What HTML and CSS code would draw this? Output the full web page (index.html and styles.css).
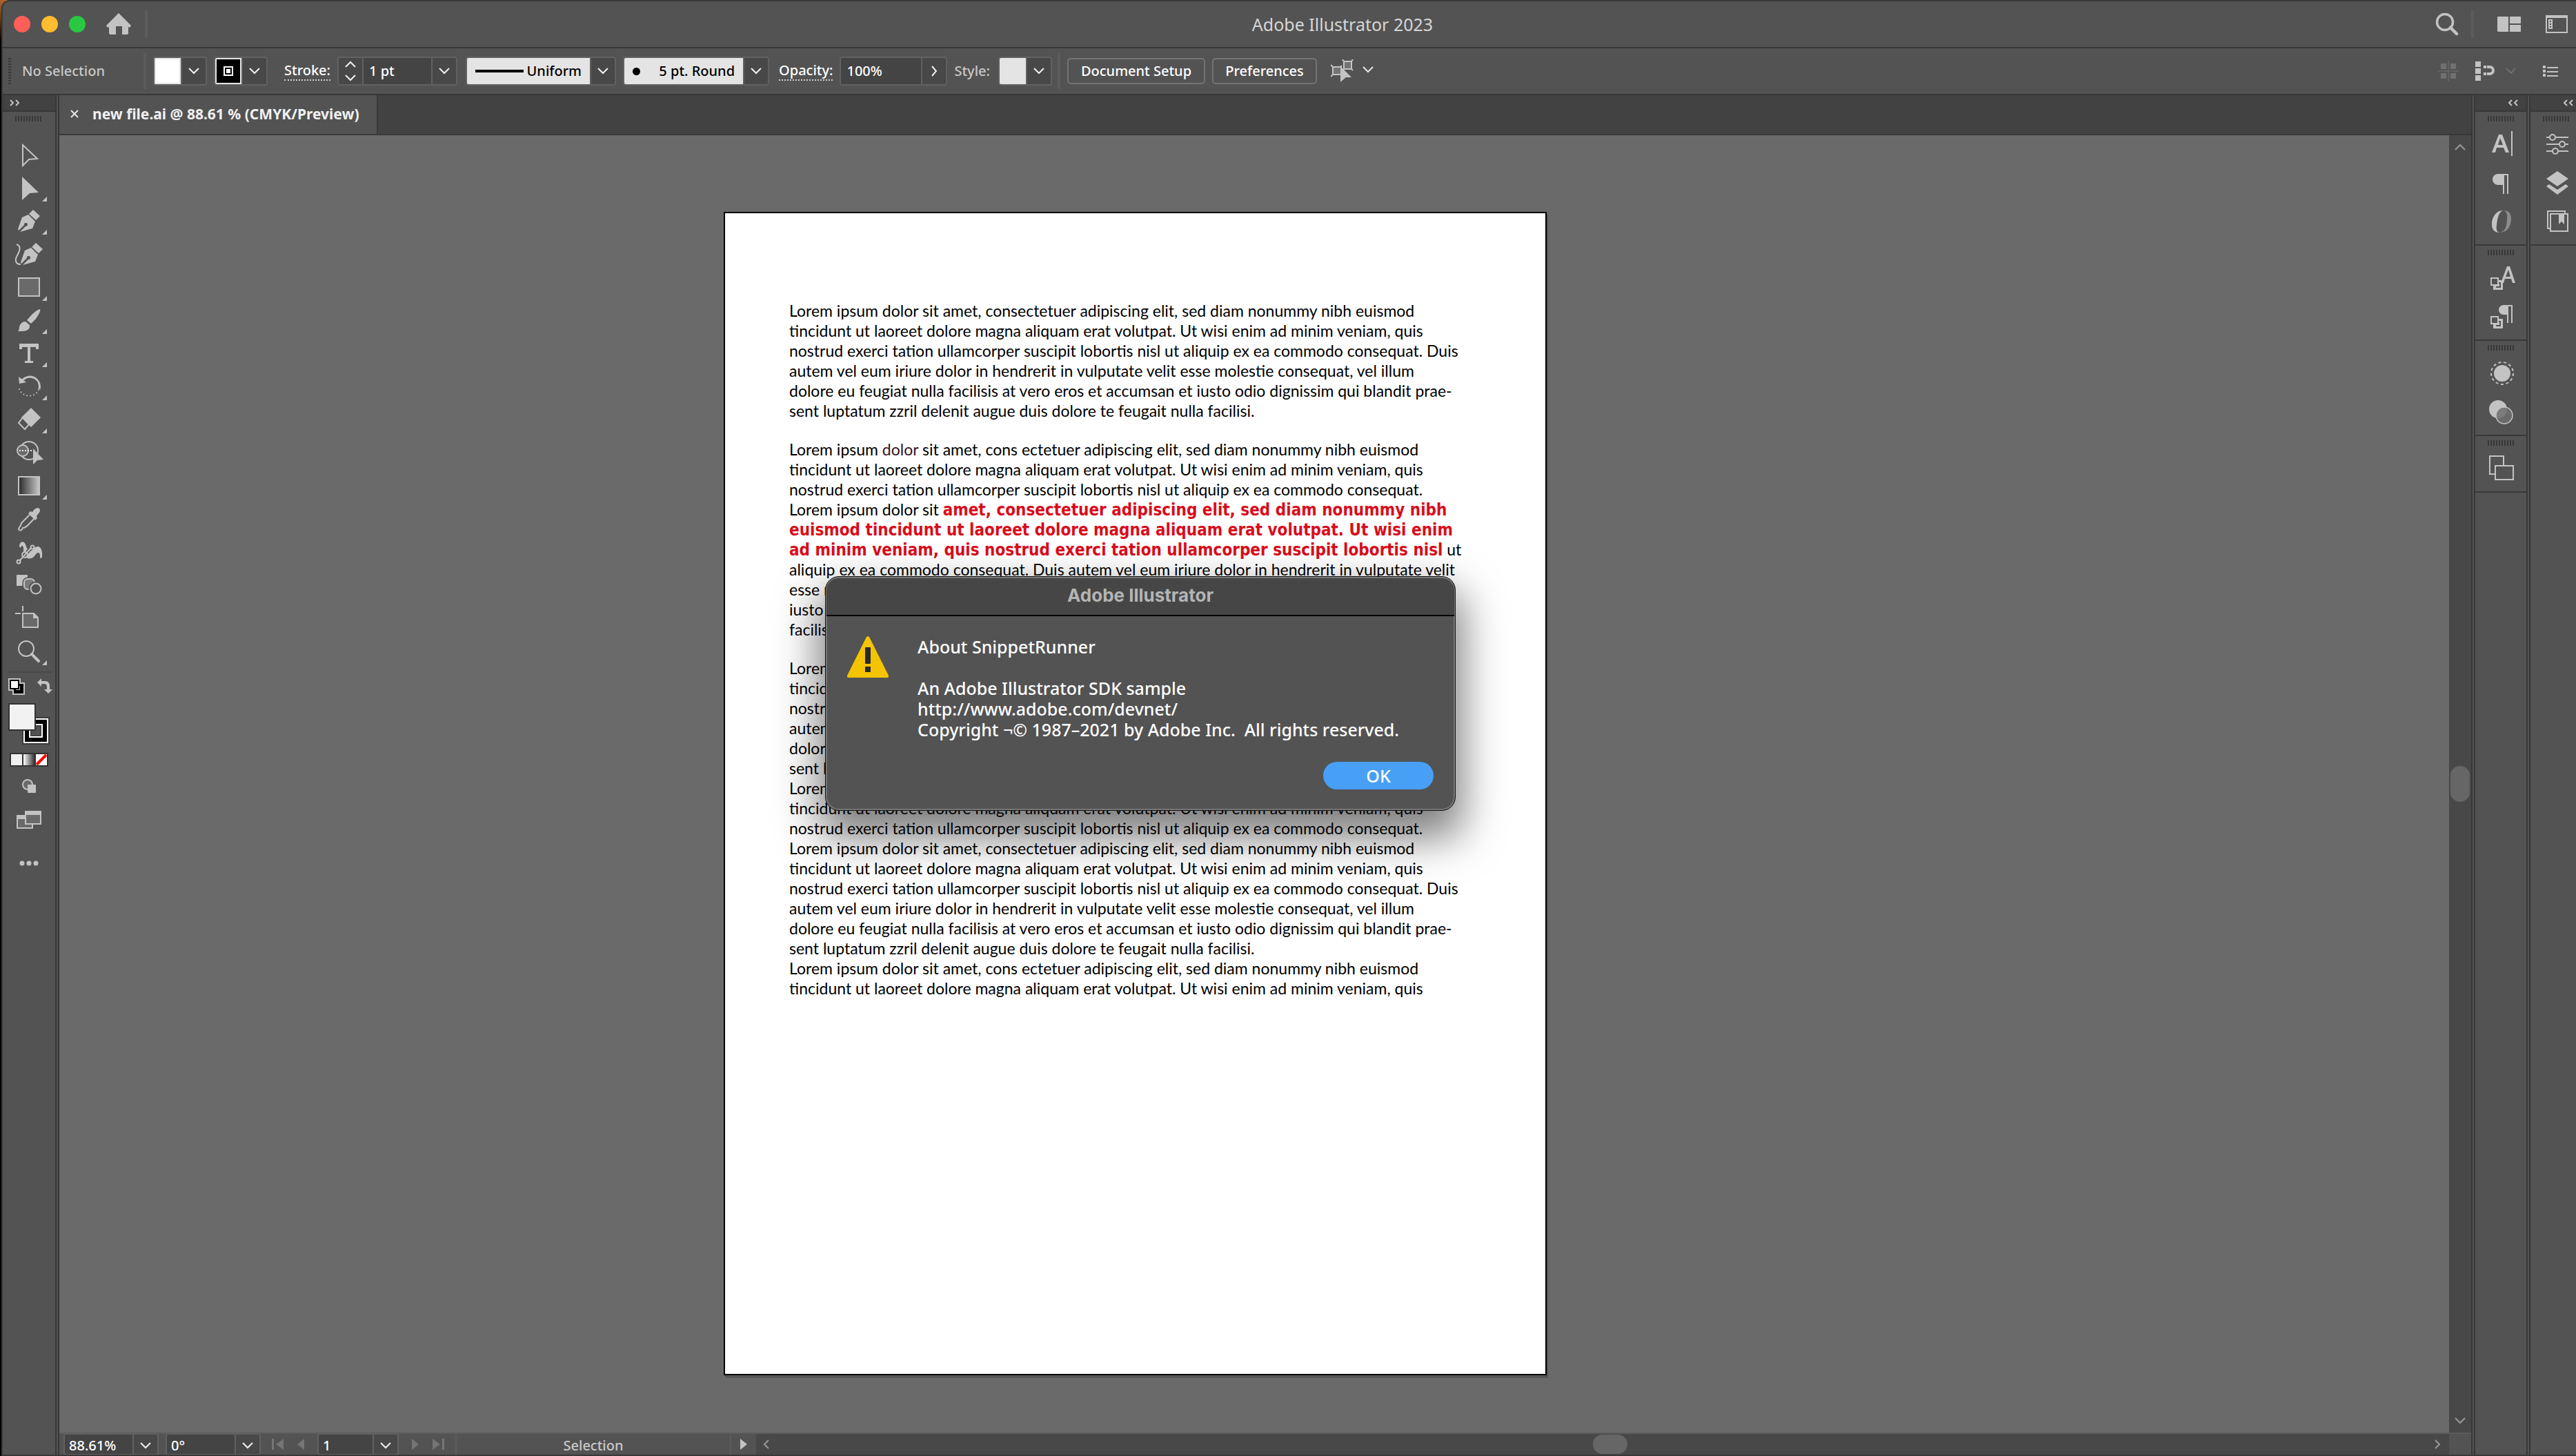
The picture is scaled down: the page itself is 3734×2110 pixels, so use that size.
FILE: index.html
```html
<!DOCTYPE html>
<html lang="en">
<head>
<meta charset="utf-8">
<title>Adobe Illustrator 2023</title>
<link rel="stylesheet" href="styles.css">
</head>
<body>
<div class="window">
  <header class="titlebar">
    <div class="lights">
      <button class="light light-close" aria-label="Close"></button>
      <button class="light light-min" aria-label="Minimize"></button>
      <button class="light light-max" aria-label="Zoom"></button>
    </div>
    <button class="icon-btn home" aria-label="Home"><svg width="36" height="32" viewBox="0 0 36 32"><path fill="#c3c3c3" d="M18 0 36 18 34 21 32 20V29Q32 31 30 31H23V19H14V31H6Q4 31 4 29V20L2 21 0 18Z"/></svg></button>
    <span class="vsep"></span>
    <h1 class="app-title">Adobe Illustrator 2023</h1>
    <div class="title-tools">
      <button class="icon-btn" aria-label="Search"><svg width="34" height="34" viewBox="0 0 34 34" fill="none" stroke="#c3c3c3"><circle cx="14" cy="14" r="11.500" stroke-width="3.500"/><path d="M22 22 31 31" stroke-width="4.500" stroke-linecap="round"/></svg></button>
      <span class="vsep"></span>
      <button class="icon-btn arrange" aria-label="Arrange documents"><svg width="34" height="22" viewBox="0 0 34 22" fill="#c3c3c3"><path d="M1 0H16V22H1L0 21V1ZM18 0H34V10H18ZM18 12H34V22H18Z"/></svg></button>
      <button class="icon-btn" aria-label="Workspace"><svg width="32" height="26" viewBox="0 0 32 26" fill="#c3c3c3"><path fill-rule="evenodd" d="M0 0H32V26H0ZM2 4V24H30V4ZM4 6H10V20H4ZM6 8V10H8V8ZM6 12V14H8V12ZM6 16V18H8V16Z"/></svg></button>
    </div>
  </header>

  <section class="controls" aria-label="Control panel">
    <span class="hgrip"></span>
    <span class="no-selection">No Selection</span>
    <span class="vsep control-sep"></span>
    <div class="combo fill-combo"><span class="swatch swatch-fill"></span><button class="drop" aria-label="Fill"><svg class="chev" viewBox="0 0 16 10"><path d="M1 1 8 8 15 1"/></svg></button></div>
    <div class="combo stroke-combo"><span class="swatch swatch-stroke"><svg width="14" height="14" viewBox="0 0 14 14"><path fill="#fff" fill-rule="evenodd" d="M0 0H14V14H0ZM2 2V12H12V2Z"/><path fill="#fff" d="M4 4H10V10H4Z"/></svg></span><button class="drop" aria-label="Stroke color"><svg class="chev" viewBox="0 0 16 10"><path d="M1 1 8 8 15 1"/></svg></button></div>
    <label class="dotted stroke-label" for="weight">Stroke:</label>
    <div class="combo weight-combo">
      <button class="stepper" aria-label="Step weight"><svg width="18" height="30" viewBox="0 0 18 30"><path d="M2 9 9 2 16 9M2 21 9 28 16 21"/></svg></button>
      <input class="field" id="weight" value="1 pt">
      <button class="drop" aria-label="Weights"><svg class="chev" viewBox="0 0 16 10"><path d="M1 1 8 8 15 1"/></svg></button>
    </div>
    <div class="combo profile-combo"><span class="sample"><span class="line"></span>Uniform</span><button class="drop" aria-label="Profile"><svg class="chev" viewBox="0 0 16 10"><path d="M1 1 8 8 15 1"/></svg></button></div>
    <div class="combo brush-combo"><span class="sample"><span class="dot"></span>5 pt. Round</span><button class="drop" aria-label="Brush"><svg class="chev" viewBox="0 0 16 10"><path d="M1 1 8 8 15 1"/></svg></button></div>
    <label class="dotted opacity-label" for="opacity">Opacity:</label>
    <div class="combo opacity-combo">
      <input class="field" id="opacity" value="100%">
      <button class="drop" aria-label="More opacity"><svg width="10" height="16" viewBox="0 0 10 16"><path d="M2 1 8 8 2 15"/></svg></button>
    </div>
    <span class="style-label">Style:</span>
    <div class="combo style-combo"><span class="swatch"></span><button class="drop" aria-label="Graphic style"><svg class="chev" viewBox="0 0 16 10"><path d="M1 1 8 8 15 1"/></svg></button></div>
    <span class="vsep control-sep"></span>
    <button class="push push-setup">Document Setup</button>
    <button class="push push-prefs">Preferences</button>
    <button class="icon-btn similar" aria-label="Select similar objects"><svg width="64" height="34" viewBox="0 0 64 34" fill="none" stroke="#c3c3c3" stroke-width="2"><path fill="#737373" d="M19 3H30V14H19ZM3 11H15V22H3Z"/><path d="M17 0 19 3M32 0 30 3M32 16 30 14M0 8 3 11M0 25 3 22M16 9 14 11"/><path fill="#c3c3c3" stroke="none" d="M14 10 30 26H22L14 33Z"/><path stroke="#e6e6e6" d="M47 11 54 18 61 11"/></svg></button>
    <div class="control-tools">
      <button class="icon-btn" aria-label="Snap to grid"><svg width="30" height="30" viewBox="0 0 30 30" fill="#707070"><path fill="#626262" d="M14 0H16V30H14ZM0 14H30V16H0Z"/><path d="M4 4H12V12H4ZM18 4H26V12H18ZM4 18H12V26H4ZM18 18H26V26H18Z"/></svg></button>
      <button class="icon-btn snap" aria-label="Snap to glyph"><svg width="60" height="28" viewBox="0 0 60 28" fill="#c3c3c3"><path d="M0 0H8V8H0ZM0 10H8V18H0ZM0 20H8V28H0ZM12 6H16V10H12ZM12 16H16V20H12ZM17 6H21A7 7 0 0 1 21 20H17V16H21A3 3 0 0 0 21 10H17Z"/><path d="M45 10 52 17 58 10" fill="none" stroke="#707070" stroke-width="2"/></svg></button>
      <button class="icon-btn" aria-label="Panel menu"><svg width="22" height="16" viewBox="0 0 22 16" fill="#c3c3c3"><path d="M0 0H4V4H0ZM0 6H4V10H0ZM0 12H4V16H0ZM6 2H22V4H6ZM6 8H22V10H6ZM6 14H22V16H6Z"/></svg></button>
    </div>
  </section>

  <main class="workspace">
    <nav class="tools" aria-label="Tools">
      <button class="collapse" aria-label="Expand tools"><svg width="14" height="10" viewBox="0 0 14 10"><path d="M1 1 5 5 1 9M9 1 13 5 9 9"/></svg></button>
      <span class="grip"></span>
      <div class="tool-list">
        <button class="tool" aria-label="Selection"><svg viewBox="0 0 76 48"><path d="M29 9V39L38 30 50 29Z" fill="none" stroke="#c3c3c3" stroke-width="2"/></svg></button>
        <button class="tool" aria-label="Direct Selection"><svg viewBox="0 0 76 48"><path d="M28 7 52 30 39 31 28 41Z"/><path d="M64 36V43H57Z"/></svg></button>
        <button class="tool" aria-label="Pen"><svg viewBox="0 0 76 48"><path d="M44 7 54 16 48 22 38 13ZM37 14 47 24 43 34 25 39 33 31A2.500 2.500 0 1 0 31 29L23 37 22 35 28 18Z"/><path d="M64 36V43H57Z"/></svg></button>
        <button class="tool" aria-label="Curvature"><svg viewBox="0 0 76 48"><path d="M48 7 58 16 52 22 42 13ZM41 14 51 24 47 34 29 39 37 31A2.500 2.500 0 1 0 35 29L27 37 26 35 32 18Z"/><path d="M20 9C28 12 24 20 20 27 17 34 20 38 26 38" fill="none" stroke="#c3c3c3" stroke-width="2"/></svg></button>
        <button class="tool" aria-label="Rectangle"><svg viewBox="0 0 76 48"><path d="M23 10H53V36H23Z" fill="#6a6a6a" stroke="#c3c3c3" stroke-width="2"/><path d="M64 36V43H57Z"/></svg></button>
        <button class="tool" aria-label="Paintbrush"><svg viewBox="0 0 76 48"><path d="M54 7Q56 9 48 21L41 28 35 23 43 14Q51 7 54 7ZM33 25 39 30Q40 38 30 39L22 39Q24 37 24 33 26 25 33 25Z"/><path d="M64 36V43H57Z"/></svg></button>
        <button class="tool" aria-label="Type"><svg viewBox="0 0 76 48"><path d="M24 9H52V17H48V14H40V34H44V37H32V34H36V14H28V17H24Z"/><path d="M64 36V43H57Z"/></svg></button>
        <button class="tool" aria-label="Rotate"><svg viewBox="0 0 76 48"><path d="M28 14C40 3 56 12 53 27" fill="none" stroke="#c3c3c3" stroke-width="3"/><path d="M23 9 24 19 34 17Z"/><path d="M24 27C28 38 46 41 52 28" fill="none" stroke="#c3c3c3" stroke-width="2" stroke-linecap="round" stroke-dasharray="0 5"/><path d="M64 36V43H57Z"/></svg></button>
        <button class="tool" aria-label="Eraser"><svg viewBox="0 0 76 48"><path d="M41 6 55 20 41 34 27 20Z"/><path d="M29 20 38 30 32 37 23 28Z" fill="none" stroke="#c3c3c3" stroke-width="2"/><path d="M64 36V43H57Z"/></svg></button>
        <button class="tool" aria-label="Shape Builder"><svg viewBox="0 0 76 48"><circle cx="38" cy="20" r="13" fill="none" stroke="#c3c3c3" stroke-width="2"/><circle cx="29" cy="20" r="8" fill="#6a6a6a" stroke="#c3c3c3" stroke-width="2"/><path d="M24 20H44" fill="none" stroke="#eee" stroke-width="2" stroke-dasharray="2 2"/><path d="M44 17 59 33 50 34 44 40Z"/></svg></button>
        <button class="tool" aria-label="Gradient"><svg viewBox="0 0 76 48"><defs><linearGradient id="g1"><stop offset="0" stop-color="#2a2a2a"/><stop offset="1" stop-color="#c8c8c8"/></linearGradient></defs><path d="M23 10H53V36H23Z" fill="url(#g1)" stroke="#c3c3c3" stroke-width="2"/><path d="M64 36V43H57Z"/></svg></button>
        <button class="tool" aria-label="Eyedropper"><svg viewBox="0 0 76 48"><path d="M39 17 27 29C27 34 23 34 23 38 25 41 28 39 29 36 33 36 35 34 45 23" fill="none" stroke="#c3c3c3" stroke-width="2"/><path d="M45 10Q50 5 53 8 56 11 51 16L49 19 50 22 47 25 37 15 40 12 43 13Z"/></svg></button>
        <button class="tool" aria-label="Puppet Warp"><svg viewBox="0 0 76 48"><path d="M24 15C24 7 31 6 33 12 35 18 37 23 43 20 49 13 55 13 57 23V31L54 32C55 22 50 22 46 29 39 36 30 32 30 22 31 13 27 12 26 17Z"/><path d="M24 36 42 16" fill="none" stroke="#535353" stroke-width="5"/><path d="M24 36 42 16" fill="none" stroke="#c3c3c3" stroke-width="2"/><circle cx="23" cy="37" r="2.500" fill="#535353" stroke="#c3c3c3" stroke-width="2"/><circle cx="43" cy="16" r="2.500" fill="#535353" stroke="#c3c3c3" stroke-width="2"/><circle cx="32" cy="27" r="4" fill="none" stroke="#c3c3c3" stroke-width="2"/></svg></button>
        <button class="tool" aria-label="Blend"><svg viewBox="0 0 76 48"><path d="M20 8H36V24H20Z"/><rect x="31" y="14" width="15" height="15" rx="5" fill="#7a7a7a" stroke="#535353" stroke-width="5"/><rect x="31" y="14" width="15" height="15" rx="5" fill="#7a7a7a" stroke="#c3c3c3" stroke-width="2"/><circle cx="48" cy="28" r="8" fill="#535353" stroke="#535353" stroke-width="5"/><circle cx="48" cy="28" r="7.500" fill="#535353" stroke="#c3c3c3" stroke-width="2"/></svg></button>
        <button class="tool" aria-label="Artboard"><svg viewBox="0 0 76 48"><path d="M29 16H45L51 22V36H29Z" fill="#6a6a6a" stroke="#c3c3c3" stroke-width="2"/><path d="M44 15 52 23H44ZM28 5H30V13H28ZM18 15H26V17H18Z"/></svg></button>
        <button class="tool" aria-label="Zoom"><svg viewBox="0 0 76 48"><circle cx="34" cy="19" r="11" fill="none" stroke="#c3c3c3" stroke-width="2"/><path d="M42 27 52 37" fill="none" stroke="#c3c3c3" stroke-width="4" stroke-linecap="round"/><path d="M64 36V43H57Z"/></svg></button>
      </div>
      <div class="color-tools">
        <div class="color-swap">
          <button class="icon-btn" aria-label="Default fill and stroke"><svg width="24" height="24" viewBox="0 0 24 24"><path fill="#c3c3c3" d="M0 0H18V6H24V24H6V18H0Z"/><path d="M8 8H22V22H8Z"/><path d="M11 11H17V17H11Z" fill="#c3c3c3"/><path d="M3 3H15V15H3Z" fill="#fff" stroke="#000" stroke-width="2"/></svg></button>
          <button class="icon-btn" aria-label="Swap fill and stroke"><svg width="22" height="22" viewBox="0 0 22 22"><path fill="#c3c3c3" d="M0 6 6 0V4H11Q18 4 18 11V16H22L16 22 10 16H14V12Q14 8 10 8H6V12Z"/></svg></button>
        </div>
        <button class="icon-btn" aria-label="Fill and stroke"><svg width="60" height="60" viewBox="0 0 60 60"><path fill="#3a3a3a" d="M20 20H60V60H20Z"/><path fill="#fff" d="M22 22H58V58H22Z"/><path d="M24 24H56V56H24Z"/><path d="M31 31H49V49H31Z" fill="#444" stroke="#fff" stroke-width="2"/><path d="M34 34H46V46H34Z" fill="#535353"/><path fill="#333" d="M0 0H40V40H0Z"/><path fill="#f2f2f2" d="M2 2H38V38H2Z"/></svg></button>
        <button class="icon-btn paint-modes" aria-label="Paint mode"><svg width="56" height="20" viewBox="0 0 56 20"><defs><linearGradient id="g2"><stop offset="0" stop-color="#fff"/><stop offset="1" stop-color="#333"/></linearGradient></defs><path fill="#333" d="M0 0H56V20H0Z"/><path fill="#f0f0f0" d="M2 2H18V18H2Z"/><path fill="url(#g2)" d="M20 2H36V18H20Z"/><path fill="#fff" d="M38 2H54V18H38Z"/><path stroke="#f00" stroke-width="4" d="M39 17 53 3"/></svg></button>
        <button class="icon-btn draw-mode" aria-label="Drawing mode"><svg width="20" height="20" viewBox="0 0 20 20"><circle cx="8" cy="8" r="7" fill="#6a6a6a" stroke="#c3c3c3" stroke-width="2"/><rect x="8" y="8" width="12" height="12" rx="1" fill="#c3c3c3"/></svg></button>
        <button class="icon-btn screen-mode" aria-label="Screen mode"><svg width="36" height="26" viewBox="0 0 36 26" fill="#6a6a6a" stroke="#c3c3c3" stroke-width="2"><path d="M1 7H23V25H1Z"/><path fill="#c3c3c3" d="M1 7H23V11H1Z"/><path d="M13 1H35V19H13Z"/><path fill="#c3c3c3" d="M13 1H35V5H13Z"/></svg></button>
        <button class="icon-btn more" aria-label="Edit toolbar"><svg width="28" height="8" viewBox="0 0 28 8" fill="#c3c3c3"><circle cx="4" cy="4" r="3.500"/><circle cx="14" cy="4" r="3.500"/><circle cx="24" cy="4" r="3.500"/></svg></button>
      </div>
    </nav>

    <section class="document">
      <div class="tabs">
        <div class="tab"><button class="icon-btn" aria-label="Close tab"><svg width="12" height="12" viewBox="0 0 12 12" stroke="#e6e6e6" stroke-width="2"><path d="M1 1 11 11M11 1 1 11"/></svg></button><span>new file.ai @ 88.61 % (CMYK/Preview)</span></div>
      </div>
      <div class="view">
        <div class="canvas">
          <article class="artboard">
            <p>Lorem ipsum dolor sit amet, consectetuer adipiscing elit, sed diam nonummy nibh euismod<br>tincidunt ut laoreet dolore magna aliquam erat volutpat. Ut wisi enim ad minim veniam, quis<br>nostrud exerci tation ullamcorper suscipit lobortis nisl ut aliquip ex ea commodo consequat. Duis<br>autem vel eum iriure dolor in hendrerit in vulputate velit esse molestie consequat, vel illum<br>dolore eu feugiat nulla facilisis at vero eros et accumsan et iusto odio dignissim qui blandit prae-<br>sent luptatum zzril delenit augue duis dolore te feugait nulla facilisi.</p>
            <p>Lorem ipsum <span class="tint">dolor</span> sit amet, cons ectetuer adipiscing elit, sed diam nonummy nibh euismod<br>tincidunt ut laoreet dolore magna aliquam erat volutpat. Ut wisi enim ad minim veniam, quis<br>nostrud exerci tation ullamcorper suscipit lobortis nisl ut aliquip ex ea commodo consequat.<br>Lorem ipsum dolor sit <strong>amet, consectetuer adipiscing elit, sed diam nonummy nibh<br>euismod tincidunt ut laoreet dolore magna aliquam erat volutpat. Ut wisi enim<br>ad minim veniam, quis nostrud exerci tation ullamcorper suscipit lobortis nisl</strong> ut<br>aliquip ex ea commodo consequat. Duis autem vel eum iriure dolor in hendrerit in vulputate velit<br>esse molestie consequat, vel illum dolore eu feugiat nulla facilisis at vero eros et accumsan et<br>iusto odio dignissim qui blandit praesent luptatum zzril delenit augue duis dolore te feugait nulla<br>facilisi.</p>
            <p>Lorem ipsum dolor sit amet, cons ectetuer adipiscing elit, sed diam nonummy nibh euismod<br>tincidunt ut laoreet dolore magna aliquam erat volutpat. Ut wisi enim ad minim veniam, quis<br>nostrud exerci tation ullamcorper suscipit lobortis nisl ut aliquip ex ea commodo<br>autem vel eum iriure dolor in hendrerit in vulputate velit esse molestie consequat, vel illum<br>dolore eu feugiat nulla facilisis at vero eros et accumsan et iusto odio dignissim qui blandit<br>sent luptatum zzril delenit augue duis dolore te feugait nulla facilisi.<br>Lorem ipsum dolor sit amet, cons ectetuer adipiscing elit, sed diam nonummy nibh euismod<br>tincidunt ut laoreet dolore magna aliquam erat volutpat. Ut wisi enim ad minim veniam, quis<br>nostrud exerci tation ullamcorper suscipit lobortis nisl ut aliquip ex ea commodo consequat.<br>Lorem ipsum dolor sit amet, consectetuer adipiscing elit, sed diam nonummy nibh euismod<br>tincidunt ut laoreet dolore magna aliquam erat volutpat. Ut wisi enim ad minim veniam, quis<br>nostrud exerci tation ullamcorper suscipit lobortis nisl ut aliquip ex ea commodo consequat. Duis<br>autem vel eum iriure dolor in hendrerit in vulputate velit esse molestie consequat, vel illum<br>dolore eu feugiat nulla facilisis at vero eros et accumsan et iusto odio dignissim qui blandit prae-<br>sent luptatum zzril delenit augue duis dolore te feugait nulla facilisi.<br>Lorem ipsum dolor sit amet, cons ectetuer adipiscing elit, sed diam nonummy nibh euismod<br>tincidunt ut laoreet dolore magna aliquam erat volutpat. Ut wisi enim ad minim veniam, quis</p>
          </article>
        </div>
        <div class="vscroll">
          <svg class="chev" viewBox="0 0 16 10"><path d="M1 9 8 2 15 9"/></svg>
          <span class="vthumb"></span>
          <svg class="chev" viewBox="0 0 16 10"><path d="M1 1 8 8 15 1"/></svg>
        </div>
      </div>
      <footer class="status">
        <div class="combo status-combo"><input class="field" aria-label="Zoom level" value="88.61%"><button class="drop" aria-label="Zoom presets"><svg class="chev" viewBox="0 0 16 10"><path d="M1 1 8 8 15 1"/></svg></button></div>
        <div class="combo status-combo"><input class="field" aria-label="Rotation" value="0°"><button class="drop" aria-label="Rotation presets"><svg class="chev" viewBox="0 0 16 10"><path d="M1 1 8 8 15 1"/></svg></button></div>
        <button class="icon-btn first" aria-label="First and previous"><svg width="48" height="18" viewBox="0 0 48 18" fill="#757575"><path d="M0 1H3V17H0ZM17 1V17L6 9ZM47 1V17L37 9Z"/></svg></button>
        <div class="combo status-combo page-combo"><input class="field" aria-label="Artboard number" value="1"><button class="drop" aria-label="Artboards"><svg class="chev" viewBox="0 0 16 10"><path d="M1 1 8 8 15 1"/></svg></button></div>
        <button class="icon-btn last" aria-label="Next and last"><svg width="48" height="18" viewBox="0 0 48 18" fill="#757575"><path d="M1 1V17L11 9ZM31 1V17L42 9ZM45 1H48V17H45Z"/></svg></button>
        <div class="status-text">Selection</div>
        <button class="icon-btn status-more" aria-label="Status options"><svg width="12" height="18" viewBox="0 0 12 18" fill="#c3c3c3"><path d="M1 1V17L11 9Z"/></svg></button>
        <div class="hscroll">
          <svg width="10" height="16" viewBox="0 0 10 16"><path d="M8 2 2 8 8 14"/></svg>
          <span class="hthumb"></span>
          <svg width="10" height="16" viewBox="0 0 10 16"><path d="M2 2 8 8 2 14"/></svg>
        </div>
      </footer>
    </section>

    <aside class="dock">
      <button class="collapse" aria-label="Expand panels"><svg width="14" height="10" viewBox="0 0 14 10"><path d="M5 1 1 5 5 9M13 1 9 5 13 9"/></svg></button>
      <div class="group"><span class="grip"></span>
        <button class="panel" aria-label="Character"><svg viewBox="0 0 74 56"><path fill-rule="evenodd" d="M24 41 34 15H39L49 41H44L41 34H31L29 41ZM33 30H40L36 20ZM52 10H54V46H52Z"/></svg></button>
        <button class="panel" aria-label="Paragraph"><svg viewBox="0 0 74 56"><path d="M48 16V45H46V18H42V45H40V32H33A8 8 0 0 1 33 16Z"/></svg></button>
        <button class="panel" aria-label="OpenType"><svg viewBox="0 0 74 56"><path d="M41 13C29 13 24 24 24 33 24 41 28 45 35 45 31 44 30 40 31 34 32 25 34 14 41 13Z"/><path fill="#8c8c8c" d="M41 13C48 13 52 17 52 25 52 35 47 45 35 45 44 44 46 35 46 25 47 18 45 14 41 13Z"/></svg></button>
      </div>
      <div class="group"><span class="grip"></span>
        <button class="panel" aria-label="Character Styles"><svg viewBox="0 0 74 56"><path fill-rule="evenodd" d="M37 36 46 12H50L58 36H54L52 30H43L41 36ZM44 27H51L48 17Z"/><path d="M26 32H40V46H26Z"/><path d="M31 36H36V42H30" fill="none" stroke="#535353" stroke-width="2"/><path d="M23 29H33V39H23Z" fill="#535353" stroke="#c3c3c3" stroke-width="2"/></svg></button>
        <button class="panel" aria-label="Paragraph Styles"><svg viewBox="0 0 74 56"><path d="M54 12V38H52V14H48V38H46V26H41A7 7 0 0 1 41 12Z"/><path d="M26 32H40V46H26Z"/><path d="M31 36H36V42H30" fill="none" stroke="#535353" stroke-width="2"/><path d="M23 29H33V39H23Z" fill="#535353" stroke="#c3c3c3" stroke-width="2"/></svg></button>
      </div>
      <div class="group"><span class="grip"></span>
        <button class="panel" aria-label="Appearance"><svg viewBox="0 0 74 56"><circle cx="39" cy="29" r="12"/><circle cx="39" cy="29" r="16" fill="none" stroke="#c3c3c3" stroke-width="2" stroke-dasharray="4 3.700"/></svg></button>
        <button class="panel" aria-label="Transparency"><svg viewBox="0 0 74 56"><circle cx="33" cy="25" r="13"/><circle cx="42" cy="34" r="12" fill="#707070" fill-opacity="0.850" stroke="#c3c3c3" stroke-width="1.500"/></svg></button>
      </div>
      <div class="group"><span class="grip"></span>
        <button class="panel" aria-label="Pathfinder"><svg viewBox="0 0 74 56" stroke="#c3c3c3" stroke-width="2"><path d="M21 11H41V37H21Z" fill="#535353"/><path d="M29 25H55V45H29Z" fill="#535353"/></svg></button>
      </div>
    </aside>
    <aside class="dock dock-edge">
      <button class="collapse" aria-label="Expand panels"><svg width="14" height="10" viewBox="0 0 14 10"><path d="M5 1 1 5 5 9M13 1 9 5 13 9"/></svg></button>
      <div class="group"><span class="grip"></span>
        <button class="panel" aria-label="Properties"><svg viewBox="0 0 74 56"><path d="M23 18H55V20H23ZM23 28H55V30H23ZM23 38H55V40H23Z"/><g fill="#535353" stroke="#c3c3c3" stroke-width="2"><circle cx="32" cy="19" r="4"/><circle cx="46" cy="29" r="4"/><circle cx="36" cy="39" r="4"/></g></svg></button>
        <button class="panel" aria-label="Layers"><svg viewBox="0 0 74 56"><path d="M39 12 55 23 39 34 23 23ZM27 31 39 39 51 31 55 34 39 46 23 34Z"/></svg></button>
        <button class="panel" aria-label="Libraries"><svg viewBox="0 0 74 56"><path d="M25 14H50V18H54V43H29V39H25Z" fill="#535353" stroke="#c3c3c3" stroke-width="2"/><path d="M29 18H54V43H29Z" fill="#535353" stroke="#c3c3c3" stroke-width="2"/><path d="M41 19H49V33L45 29 41 33Z"/></svg></button>
      </div>
    </aside>
  </main>

  <div class="dialog" role="alertdialog" aria-labelledby="dialog-title">
    <h2 class="dialog-title" id="dialog-title">Adobe Illustrator</h2>
    <div class="dialog-body">
      <svg width="60" height="60" viewBox="0 0 60 60"><path fill="#f5c400" d="M30 0Q32 0 33 3L60 57Q61 60 58 60H2Q-1 60 0 57L27 3Q28 0 30 0Z"/><path fill="#2a2a2a" d="M26 17Q26 16 27 16H33Q34 16 34 17V39Q34 40 33 40H27Q26 40 26 39ZM26 44H34V52H26Z"/></svg>
      <div class="dialog-text">
        <p>About SnippetRunner</p>
        <p>An Adobe Illustrator SDK sample<br>http://www.adobe.com/devnet/<br>Copyright ¬© 1987–2021 by Adobe Inc.&nbsp; All rights reserved.</p>
      </div>
    </div>
    <button class="ok">OK</button>
  </div>
</div>
</body>
</html>
```
FILE: styles.css
```css
* { box-sizing: border-box; }
body {
  margin: 0;
  height: 100vh;
  background: linear-gradient(#b0642c 0, #000 60px);
  font-family: "Noto Sans", "Open Sans", sans-serif;
  font-size: 20px;
  font-weight: 500;
  line-height: 28px;
  color: #fff;
}
button, input { font: inherit; color: inherit; margin: 0; padding: 0; border: 0; background: none; border-radius: 0; }
button { display: flex; align-items: center; justify-content: center; }
svg { display: block; flex: none; }
h1, h2, p { margin: 0; }

.window {
  position: relative;
  display: flex;
  flex-direction: column;
  height: 100vh;
  margin-left: 2px;
  border: 2px solid #383838;
  border-right: 0;
  border-top-left-radius: 12px;
  background: #535353;
  overflow: hidden;
}
.vsep { width: 4px; height: 40px; background: #5c5c5c; }

.titlebar {
  display: grid;
  grid-template-columns: auto auto auto 1fr auto;
  align-items: center;
  height: 68px;
  padding: 0 12px 0 16px;
  border-bottom: 2px solid #383838;
}
.lights { display: flex; gap: 16px; }
.light { width: 24px; height: 24px; border-radius: 50%; }
.light-close { background: #ff5f57; }
.light-min { background: #febc2e; }
.light-max { background: #28c840; }
.home { margin: 0 20px 0 30px; }
.app-title { justify-self: center; padding-left: 148px; font-size: 25px; font-weight: 400; color: #d6d6d6; }
.title-tools { display: flex; align-items: center; gap: 18px; }
.arrange { margin: 0 18px 0 16px; }

.controls { display: flex; align-items: center; height: 68px; padding: 0 26px 0 8px; border-bottom: 2px solid #383838; }
.hgrip { width: 4px; height: 38px; background: repeating-linear-gradient(#383838 0 2px, transparent 2px 4px); }
.no-selection { width: 192px; padding-left: 16px; color: #c8c8c8; }
.control-sep { height: 52px; }
.combo { display: flex; height: 42px; border: 2px solid #616161; border-radius: 4px; background: #484848; overflow: hidden; flex: none; }
.drop { flex: none; width: 36px; border-left: 2px solid #616161; }
.drop svg, .stepper svg, .collapse svg, .vscroll svg, .hscroll svg { fill: none; stroke: #f0f0f0; stroke-width: 2px; }
.chev { width: 16px; height: 10px; }
.swatch { flex: 1; display: flex; align-items: center; justify-content: center; background: #e4e4e4; }
.fill-combo, .stroke-combo, .style-combo { width: 78px; }
.fill-combo { margin: 0 10px; }
.swatch-fill { background: #fff; border: 2px solid #e4e4e4; }
.swatch-stroke { background: #000; border: 2px solid #e4e4e4; }
.dotted { line-height: 26px; border-bottom: 2px dotted #d0d0d0; }
.stroke-label { margin: 0 10px 0 24px; }
.weight-combo { width: 174px; margin-right: 12px; }
.stepper { width: 36px; border-right: 2px solid #616161; }
.field { flex: 1; min-width: 0; width: 0; padding-left: 8px; background: #444; outline: 0; }
.sample { flex: 1; display: flex; align-items: center; justify-content: space-between; padding: 0 12px; color: #000; background: #e4e4e4; }
.profile-combo { width: 218px; margin-right: 10px; }
.line { width: 70px; height: 4px; background: #000; }
.brush-combo { width: 212px; }
.dot { width: 11px; height: 11px; border-radius: 50%; background: #000; }
.opacity-label { margin: 0 10px 0 14px; }
.opacity-combo { width: 156px; }
.style-label { margin: 0 12px 0 10px; color: #c8c8c8; }
.style-combo { margin-right: 8px; }
.push { height: 38px; border: 2px solid #737373; border-radius: 5px; }
.push-setup { width: 200px; margin: 0 10px; }
.push-prefs { width: 152px; }
.similar { margin-left: 20px; }
.control-tools { display: flex; align-items: center; gap: 24px; margin-left: auto; }
.snap { margin-right: 14px; }

.workspace { flex: 1; display: flex; min-height: 0; }
.collapse { width: 100%; height: 24px; padding: 0 12px; border-bottom: 2px solid #383838; background: #424242; flex: none; }
.tools .collapse { justify-content: flex-start; padding: 0 10px; }
.dock .collapse { justify-content: flex-end; }
.dock-edge .collapse { padding: 0 4px; }
.collapse svg { stroke: #c3c3c3; }
.grip { display: block; width: 38px; height: 8px; margin: 6px 18px 4px; background: repeating-linear-gradient(90deg, #383838 0 2px, transparent 2px 4px); }
.tools { display: flex; flex-direction: column; width: 82px; flex: none; border-right: 6px double #383838; }
.tool-list { padding: 21px 0 4px; }
.tool { width: 76px; height: 48px; }
.tool svg { width: 76px; height: 48px; fill: #c3c3c3; }
.color-tools { display: flex; flex-direction: column; margin: 0 4px 0 8px; padding-top: 8px; border-top: 2px solid #4a4a4a; }
.color-tools .icon-btn { align-self: flex-start; }
.color-swap { display: flex; justify-content: space-between; margin-bottom: 12px; }
.color-tools .paint-modes { margin: 12px 2px 18px; }
.color-tools .draw-mode { margin: 0 20px 26px; }
.color-tools .screen-mode { margin: 0 12px 46px; }
.color-tools .more { margin: 0 16px; }

.document { flex: 1; display: flex; flex-direction: column; min-width: 0; }
.tabs { display: flex; height: 58px; border-bottom: 2px solid #383838; background: #424242; flex: none; }
.tab { display: flex; align-items: center; gap: 20px; padding: 0 24px 2px 16px; width: 462px; border-right: 2px solid #383838; background: #535353; font-size: 21px; font-weight: 700; color: #f0f0f0; white-space: nowrap; }
.view { flex: 1; display: flex; min-height: 0; }
.canvas { flex: 1; padding: 111px 0 0 963px; background: #6a6a6a; overflow: hidden; }
.artboard {
  width: 1193px;
  height: 1686px;
  padding: 127px 0 0 93px;
  border: 2px solid #000;
  background: #fff;
  box-shadow: 2px 4px #555;
  color: #000;
  font-family: Lato, sans-serif;
  font-size: 23px;
  font-weight: 400;
  line-height: 29px;
  white-space: nowrap;
}
.artboard p { margin-bottom: 27px; }
.tint { color: #3a1420; }
.artboard strong { font-family: "DejaVu Sans Condensed", "DejaVu Sans", sans-serif; font-size: 24px; line-height: 20px; color: #d90d1c; }
.vscroll { display: flex; flex-direction: column; align-items: center; justify-content: space-between; width: 32px; padding: 12px 0; background: #484848; }
.vscroll svg, .hscroll svg { stroke: #999; }
.vthumb { width: 28px; height: 52px; border-radius: 14px; background: #666; }

.status { display: flex; align-items: center; height: 32px; flex: none; border-top: 2px solid #5c5c5c; }
.status-combo { width: 138px; height: 32px; margin: 0 4px 0 6px; }
.status-combo .field, .status-combo .drop { padding-top: 4px; }
.status-combo .field { padding-left: 6px; }
.page-combo { width: 118px; margin: 0; }
.first { margin: 0 18px 0 12px; }
.last { margin: 0 16px 0 18px; }
.status-text { width: 400px; padding-top: 4px; border: 2px solid #5c5c5c; border-width: 0 2px; text-align: center; color: #c8c8c8; }
.status-more { margin: 0 12px; }
.hscroll { flex: 1; display: flex; align-items: center; justify-content: space-between; align-self: stretch; margin-right: 32px; padding: 0 12px 0 10px; background: #484848; }
.hthumb { width: 50px; height: 28px; margin-left: 24px; border-radius: 14px; background: #666; }

.dock { display: flex; flex-direction: column; width: 80px; flex: none; border-left: 6px double #383838; overflow: hidden; }
.dock-edge { width: 72px; }
.group { border-bottom: 2px solid #383838; padding-bottom: 6px; flex: none; overflow: hidden; }
.panel { width: 74px; height: 56px; }
.panel svg { width: 74px; height: 56px; fill: #c3c3c3; }

.dialog {
  position: absolute;
  left: 1192px;
  top: 833px;
  width: 914px;
  height: 340px;
  border: 1px solid #111;
  border-radius: 20px;
  background: #535353;
  box-shadow: inset 0 0 0 2px #777, 0 30px 60px 10px rgba(0, 0, 0, 0.5);
}
.dialog-title { height: 57px; margin: 0 1px; padding-top: 13px; border-bottom: 2px solid #000; border-radius: 18px 18px 0 0; background: #464646; box-shadow: inset 0 2px #777; text-align: center; font-family: Inter, Roboto, sans-serif; font-size: 26px; font-weight: 700; color: #b4b4b4; }
.dialog-body { display: flex; gap: 42px; padding: 29px 31px 0; }
.dialog-text { font-size: 25px; line-height: 30px; white-space: nowrap; }
.dialog-text p { margin-bottom: 30px; }
.ok { width: 160px; height: 40px; margin: 2px 31px 0 auto; border-radius: 20px; background: #47a0f6; font-size: 25px; }
```
